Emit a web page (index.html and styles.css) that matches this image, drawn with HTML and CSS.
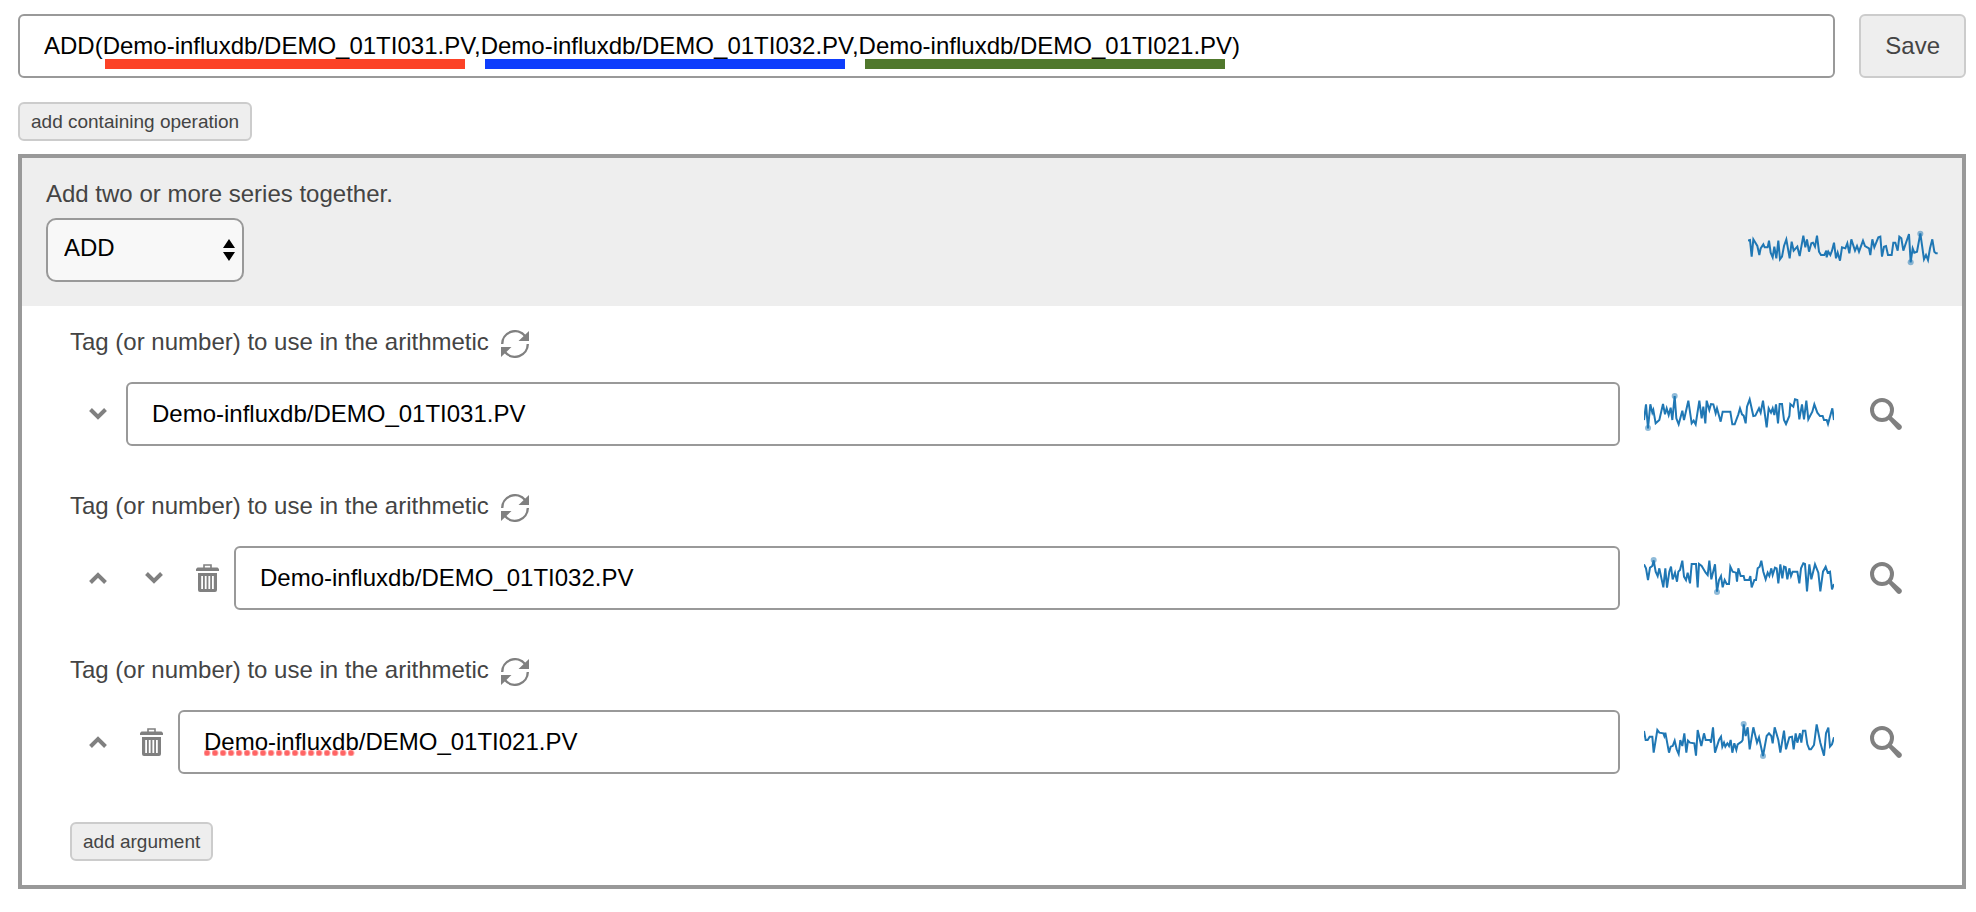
FILE: index.html
```html
<!DOCTYPE html>
<html lang="en">
<head>
  <meta charset="UTF-8">
  <title>Expression editor</title>
  <meta name="viewport" content="width=device-width, initial-scale=1.0">
  <link rel="stylesheet" href="styles.css">
</head>
<body>

<!-- Shared icons -->
<svg class="sprite" aria-hidden="true">
  <symbol id="refresh" viewBox="0 0 28 28">
    <path d="M1.2 14 A12.8 12.8 0 0 1 24 6 M26.8 14 A12.8 12.8 0 0 1 4 22" fill="none" stroke="currentColor" stroke-width="2.4"/>
    <path d="M28 1 V11 H17.5 Z M0 27 V17 H10.5 Z" fill="currentColor"/>
  </symbol>
  <symbol id="up" viewBox="0 0 18 12">
    <path d="M1.5 10.5 L9 3 L16.5 10.5" fill="none" stroke="currentColor" stroke-width="4"/>
  </symbol>
  <symbol id="down" viewBox="0 0 18 12">
    <path d="M1.5 1.5 L9 9 L16.5 1.5" fill="none" stroke="currentColor" stroke-width="4"/>
  </symbol>
  <symbol id="trash" viewBox="0 0 24 28">
    <path d="M8 4 V1 H15 V4" fill="none" stroke="currentColor" stroke-width="1.6"/>
    <path d="M1.5 3.5 H21.5 L23 5 V7 H0 V5 Z" fill="currentColor"/>
    <path fill-rule="evenodd" d="M2 9 H21 V26 Q21 28 19 28 H4 Q2 28 2 26 Z M5.2 12 V25 H7 V12 Z M8.8 12 V25 H10.6 V12 Z M12.4 12 V25 H14.2 V12 Z M16 12 V25 H17.8 V12 Z" fill="currentColor"/>
  </symbol>
  <symbol id="search" viewBox="0 0 32 32">
    <circle cx="12" cy="12" r="10" fill="none" stroke="currentColor" stroke-width="4"/>
    <path d="M18.5 21.5 L21.5 18.5 L31 27 Q32.8 29 31 31 Q29 32.8 27 31 Z" fill="currentColor"/>
  </symbol>
</svg>

<div class="top-bar">
  <div class="field">
    <input type="text" class="text-input" aria-label="Expression" spellcheck="false" value="ADD(Demo-influxdb/DEMO_01TI031.PV,Demo-influxdb/DEMO_01TI032.PV,Demo-influxdb/DEMO_01TI021.PV)">
    <div class="marks">
      <span class="mark red"></span>
      <span class="mark blue"></span>
      <span class="mark green"></span>
    </div>
  </div>
  <button class="btn">Save</button>
</div>

<button class="btn small">add containing operation</button>

<div class="operation">
  <div class="operation-head">
    <label for="operation">Add two or more series together.</label>
    <div class="operation-row">
      <div class="select">
        <select id="operation">
          <option>ADD</option>
        </select>
        <svg class="arrows" viewBox="0 0 12 22"><path d="M6 0 L12 9 H0 Z M0 13 H12 L6 22 Z"/></svg>
      </div>
      <svg class="sparkline" viewBox="325 678 570 144">
        <polyline points="325,722 331,720 336,770 341,718 353,738 359,765 363,745 371,733 375,742 384,742 388,722 393,758 399,772 404,740 410,775 416,722 421,778 427,770 433,738 440,718 450,775 456,725 462,752 473,740 480,768 491,707 497,742 502,718 508,755 515,730 520,728 526,740 532,707 538,755 544,765 554,765 560,752 561,772 566,755 572,765 577,752 583,728 589,775 594,758 601,782 607,742 617,745 623,730 629,760 635,718 646,752 652,738 658,755 670,722 676,738 688,745 692,765 698,718 704,742 716,712 722,710 727,770 733,740 739,738 745,765 756,765 761,728 767,728 774,752 779,710 785,715 791,752 808,702 813,787 819,745 824,758 832,755 842,700 853,778 859,765 865,780 871,745 878,718 884,755 889,760 894,760"/>
        <circle cx="842" cy="701" r="9"/>
        <circle cx="813" cy="787" r="9"/>
      </svg>
    </div>
  </div>

  <div class="arguments">
    <div class="argument">
      <div class="argument-label">
        <label for="arg1">Tag (or number) to use in the arithmetic</label>
        <button class="icon-btn" aria-label="Refresh"><svg width="28" height="28"><use href="#refresh"/></svg></button>
      </div>
      <div class="argument-row">
        <button class="icon-btn move" aria-label="Move down"><svg width="18" height="12"><use href="#down"/></svg></button>
        <div class="field">
          <input type="text" class="text-input" id="arg1" spellcheck="false" value="Demo-influxdb/DEMO_01TI031.PV">
        </div>
        <svg class="sparkline" viewBox="132 60 570 144">
          <polyline points="132,150 138,103 144,175 151,103 157,128 160,120 167,160 178,150 189,102 195,133 200,115 206,135 212,113 217,150 224,78 229,145 236,163 247,122 252,150 265,92 275,160 281,152 287,163 298,92 305,145 310,110 316,160 320,92 328,120 333,102 340,103 347,130 351,115 362,155 368,125 391,125 397,163 404,163 415,133 420,115 426,133 431,137 437,160 441,110 449,88 460,138 466,137 477,115 482,128 489,92 500,172 506,115 513,128 518,115 523,135 528,103 534,160 539,102 546,102 552,150 558,162 568,138 571,102 580,110 585,88 592,90 598,148 606,103 612,148 619,92 625,148 637,125 643,103 652,128 660,138 668,138 672,150 680,150 684,162 697,115 702,150"/>
          <circle cx="224" cy="78" r="9"/>
          <circle cx="144" cy="174" r="9"/>
        </svg>
        <button class="icon-btn search" aria-label="Search"><svg width="32" height="32"><use href="#search"/></svg></button>
      </div>
    </div>

    <div class="argument">
      <div class="argument-label">
        <label for="arg2">Tag (or number) to use in the arithmetic</label>
        <button class="icon-btn" aria-label="Refresh"><svg width="28" height="28"><use href="#refresh"/></svg></button>
      </div>
      <div class="argument-row">
        <button class="icon-btn move" aria-label="Move up"><svg width="18" height="12"><use href="#up"/></svg></button>
        <button class="icon-btn move" aria-label="Move down"><svg width="18" height="12"><use href="#down"/></svg></button>
        <button class="icon-btn remove" aria-label="Remove"><svg width="24" height="28"><use href="#trash"/></svg></button>
        <div class="field">
          <input type="text" class="text-input" id="arg2" spellcheck="false" value="Demo-influxdb/DEMO_01TI032.PV">
        </div>
        <svg class="sparkline" viewBox="132 72 570 144">
          <polyline points="132,103 138,115 144,150 150,113 157,108 161,91 167,125 173,138 178,115 190,172 196,115 201,173 208,125 213,110 218,148 225,128 231,155 235,125 240,120 247,92 252,140 258,150 263,128 270,160 275,102 288,102 293,172 297,102 305,108 317,128 323,135 328,92 334,148 345,103 351,185 357,150 363,138 368,172 374,150 380,162 387,162 391,110 398,125 408,128 411,155 415,115 422,138 431,138 434,150 447,150 451,138 455,172 463,150 468,150 473,115 479,110 484,92 490,125 497,148 503,128 508,138 514,115 518,135 525,113 530,115 535,160 541,103 547,145 552,110 557,112 562,148 568,115 573,138 578,125 592,125 598,160 603,115 610,100 615,102 621,184 628,103 634,148 645,103 655,128 661,184 669,125 677,110 683,128 690,125 696,178 702,162"/>
          <circle cx="161" cy="90" r="9"/>
          <circle cx="351" cy="186" r="9"/>
        </svg>
        <button class="icon-btn search" aria-label="Search"><svg width="32" height="32"><use href="#search"/></svg></button>
      </div>
    </div>

    <div class="argument">
      <div class="argument-label">
        <label for="arg3">Tag (or number) to use in the arithmetic</label>
        <button class="icon-btn" aria-label="Refresh"><svg width="28" height="28"><use href="#refresh"/></svg></button>
      </div>
      <div class="argument-row">
        <button class="icon-btn move" aria-label="Move up"><svg width="18" height="12"><use href="#up"/></svg></button>
        <button class="icon-btn remove" aria-label="Remove"><svg width="24" height="28"><use href="#trash"/></svg></button>
        <div class="field">
          <input type="text" class="text-input" id="arg3" spellcheck="false" value="Demo-influxdb/DEMO_01TI021.PV">
          <span class="misspelled"></span>
        </div>
        <svg class="sparkline" viewBox="132 84 570 144">
          <polyline points="132,123 137,150 143,150 149,140 157,140 161,188 172,120 178,128 190,130 193,138 196,128 207,188 212,170 218,168 224,152 230,178 236,192 241,150 247,168 253,130 259,188 264,152 270,158 283,160 288,197 293,120 304,168 312,130 317,150 330,150 333,158 339,112 345,188 357,150 363,140 367,170 372,158 376,170 382,160 387,168 392,150 397,188 403,160 409,180 413,163 425,155 428,150 431,103 437,138 443,112 449,178 460,112 471,158 477,142 489,198 500,138 507,130 514,138 518,160 524,112 535,150 541,188 552,122 558,178 568,142 576,140 581,178 587,130 592,158 600,130 604,158 609,122 616,122 622,163 628,178 633,178 642,165 650,103 661,158 672,197 678,130 685,113 690,170 696,163 702,142"/>
          <circle cx="431" cy="102" r="9"/>
          <circle cx="489" cy="198" r="9"/>
        </svg>
        <button class="icon-btn search" aria-label="Search"><svg width="32" height="32"><use href="#search"/></svg></button>
      </div>
    </div>

    <button class="btn small">add argument</button>
  </div>
</div>

</body>
</html>
```
FILE: styles.css
```css
* {
  box-sizing: border-box;
}

body {
  margin: 14px 10px 24px 18px;
  font-family: "Liberation Sans", Arial, sans-serif;
  font-size: 24px;
  line-height: 24px;
  color: #444;
  background: #fff;
}

input, select, button {
  font: inherit;
  margin: 0;
}

svg {
  display: block;
}

.sprite {
  display: none;
}

.top-bar {
  display: flex;
  gap: 24px;
  margin-bottom: 24px;
}

.field {
  position: relative;
  flex: 1;
  min-width: 0;
}

.text-input {
  display: block;
  width: 100%;
  height: 64px;
  padding: 0 24px;
  border: 2px solid #999;
  border-radius: 6px;
  background: #fff;
  color: #000;
}

/* coloured underlines, one for each argument of the expression */
.marks {
  position: absolute;
  left: 87px;
  top: 45px;
  display: flex;
  gap: 20px;
  pointer-events: none;
}

.mark {
  width: 360px;
  height: 10px;
}

.red { background: #fc4226; }
.blue { background: #0e3dfc; }
.green { background: #50782c; }

.misspelled {
  position: absolute;
  left: 26px;
  top: 40px;
  width: 152px;
  height: 6px;
  background: radial-gradient(circle at 3px 3px, #ff6464 2px, transparent 4px) 0 0 / 8px 6px;
  pointer-events: none;
}

.btn {
  padding: 0 24px;
  border: 2px solid #ccc;
  border-radius: 6px;
  background: #eee;
  color: #444;
  cursor: pointer;
}

.btn.small {
  display: block;
  height: 39px;
  padding: 0 11px;
  font-size: 19px;
}

.operation {
  margin-top: 13px;
  border: 4px solid #999;
}

.operation-head {
  padding: 24px;
  background: #eee;
}

.operation-head label {
  display: block;
  margin-bottom: 12px;
}

.operation-row {
  display: flex;
  align-items: center;
  justify-content: space-between;
}

.select {
  position: relative;
}

.select select {
  display: block;
  width: 198px;
  height: 64px;
  padding: 0 16px 4px;
  border: 2px solid #999;
  border-radius: 10px;
  background: #f8f8f8;
  color: #000;
  appearance: none;
}

.arrows {
  position: absolute;
  right: 9px;
  top: 21px;
  width: 12px;
  height: 22px;
  pointer-events: none;
}

.arguments {
  padding: 24px 48px;
}

.argument {
  margin-bottom: 48px;
}

.argument-label {
  display: flex;
  gap: 12px;
  margin-bottom: 24px;
}

.argument-row {
  display: flex;
  align-items: center;
}

.icon-btn {
  display: flex;
  align-items: center;
  justify-content: center;
  padding: 0;
  border: none;
  background: none;
  color: #808080;
  cursor: pointer;
}

.move {
  width: 56px;
  height: 56px;
}

.remove {
  width: 52px;
  height: 56px;
}

.search {
  width: 56px;
  height: 56px;
  margin-left: 24px;
}

.sparkline {
  width: 190px;
  height: 48px;
  flex: none;
}

.argument-row .sparkline {
  margin-left: 24px;
}

.sparkline polyline {
  fill: none;
  stroke: #1f77b4;
  stroke-width: 6;
}

.sparkline circle {
  fill: #1f77b4;
  opacity: 0.5;
}
```
